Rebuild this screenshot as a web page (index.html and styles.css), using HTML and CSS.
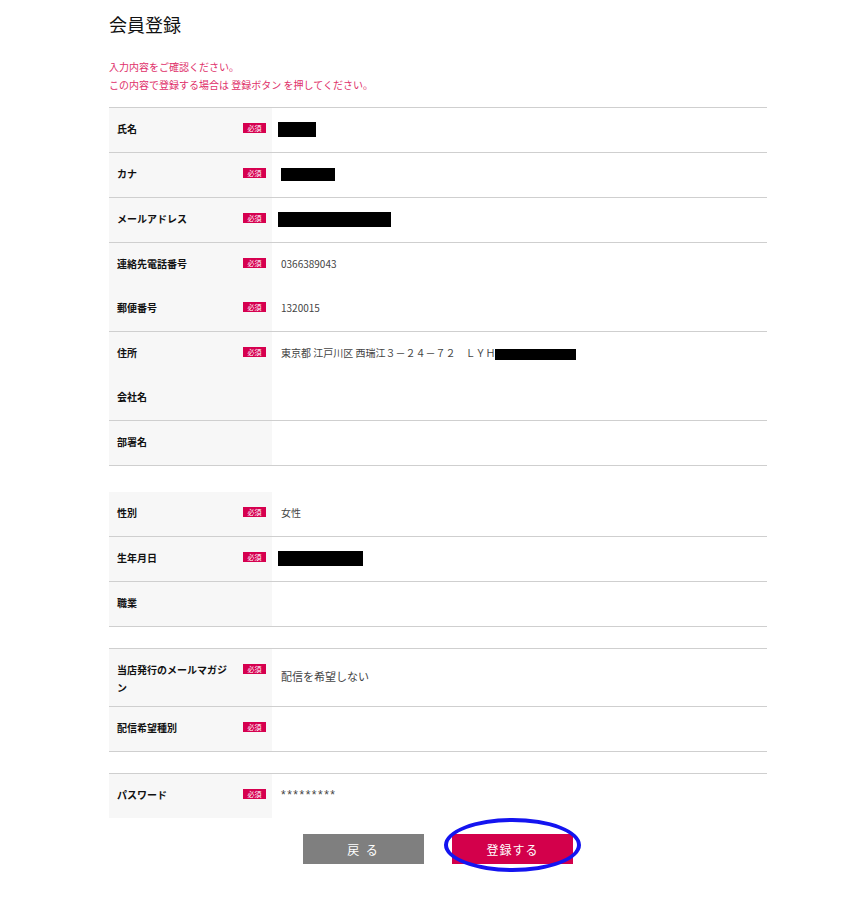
FILE: index.html
```html
<!DOCTYPE html>
<html lang="ja">
<head>
    <meta charset="UTF-8">
    <title>会員登録</title>
    <link rel="stylesheet" href="styles.css">
</head>
<body>
    <div class="wrap">
        <h1 class="page-title">会員登録</h1>
        <p class="notice">入力内容をご確認ください。<br>この内容で登録する場合は 登録ボタン を押してください。</p>

        <!-- 基本情報 -->
        <table class="form-table">
            <tr>
                <th><span class="label">氏名</span><span class="req">必須</span></th>
                <td><span class="mask" style="width:38px"></span></td>
            </tr>
            <tr>
                <th><span class="label">カナ</span><span class="req">必須</span></th>
                <td><span class="mask mask-kana" style="width:54px"></span></td>
            </tr>
            <tr>
                <th><span class="label">メールアドレス</span><span class="req">必須</span></th>
                <td><span class="mask" style="width:113px"></span></td>
            </tr>
            <tr class="no-line">
                <th><span class="label">連絡先電話番号</span><span class="req">必須</span></th>
                <td>0366389043</td>
            </tr>
            <tr>
                <th><span class="label">郵便番号</span><span class="req">必須</span></th>
                <td>1320015</td>
            </tr>
            <tr class="no-line">
                <th><span class="label">住所</span><span class="req">必須</span></th>
                <td>東京都 江戸川区 西瑞江３－２４－７２　ＬＹＨ<span class="mask mask-inline" style="width:81px"></span></td>
            </tr>
            <tr>
                <th><span class="label">会社名</span></th>
                <td></td>
            </tr>
            <tr>
                <th><span class="label">部署名</span></th>
                <td></td>
            </tr>
        </table>

        <!-- 属性 -->
        <table class="form-table no-top">
            <tr>
                <th><span class="label">性別</span><span class="req">必須</span></th>
                <td>女性</td>
            </tr>
            <tr>
                <th><span class="label">生年月日</span><span class="req">必須</span></th>
                <td><span class="mask" style="width:85px"></span></td>
            </tr>
            <tr>
                <th><span class="label">職業</span></th>
                <td></td>
            </tr>
        </table>

        <!-- メールマガジン -->
        <table class="form-table">
            <tr class="tall">
                <th><span class="label">当店発行のメールマガジン</span><span class="req">必須</span></th>
                <td class="big">配信を希望しない</td>
            </tr>
            <tr>
                <th><span class="label">配信希望種別</span><span class="req">必須</span></th>
                <td></td>
            </tr>
        </table>

        <!-- パスワード -->
        <table class="form-table">
            <tr class="no-line">
                <th><span class="label">パスワード</span><span class="req">必須</span></th>
                <td class="pw">*********</td>
            </tr>
        </table>

        <div class="buttons">
            <button class="btn btn-back">戻 る</button>
            <button class="btn btn-submit">登録する<span class="circle"></span></button>
        </div>
    </div>
</body>
</html>
```

FILE: styles.css
```css
body {
    margin: 0;
    background-color: #fff;
    color: #222;
    font-family: "Noto Sans CJK JP", "Noto Sans", sans-serif;
}
.wrap {
    width: 658px;
    margin-left: 109px;
    padding-bottom: 30px;
}
.page-title {
    margin: 0;
    padding-top: 11px;
    font-size: 18px;
    font-weight: normal;
    line-height: 26px;
    color: #111;
}
.notice {
    margin: 21px 0 13px 0;
    font-size: 10px;
    line-height: 18px;
    color: #e0306a;
}
.form-table {
    width: 100%;
    border-collapse: collapse;
    border-top: 1px solid #cfcfcf;
    margin-top: 21px;
}
.form-table:first-of-type {
    margin-top: 0;
}
.form-table.no-top {
    border-top: none;
    margin-top: 26px;
}
.form-table tr {
    border-bottom: 1px solid #cfcfcf;
}
.form-table tr.no-line {
    border-bottom: none;
}
.form-table th {
    width: 163px;
    height: 44px;
    padding: 3px 6px 0 8px;
    box-sizing: border-box;
    background-color: #f7f7f7;
    text-align: left;
    font-weight: bold;
    vertical-align: middle;
}
.form-table td {
    height: 41px;
    padding: 0 0 3px 9px;
    font-size: 10px;
    color: #444;
    vertical-align: middle;
}
.form-table tr.tall th {
    height: 57px;
}
.form-table tr.tall td {
    height: 54px;
}
.form-table th .label {
    display: inline-block;
    width: 114px;
    font-size: 10px;
    line-height: 18px;
    color: #111;
    vertical-align: top;
}
.req {
    display: inline-block;
    float: right;
    width: 23px;
    height: 10px;
    margin-top: 3px;
    background-color: #d6004f;
    color: #fff;
    font-size: 7px;
    line-height: 10px;
    text-align: center;
    font-weight: normal;
}
.form-table td.big {
    font-size: 11px;
}
.form-table td.pw {
    font-family: "Liberation Sans", sans-serif;
    font-size: 12px;
    letter-spacing: 1.5px;
}
.mask {
    display: inline-block;
    height: 15px;
    background-color: #000;
    vertical-align: middle;
    margin-left: -3px;
}
.mask-kana {
    height: 13px;
    margin-left: 0;
}
.mask-inline {
    height: 11px;
    margin-left: 0;
}
.buttons {
    display: flex;
    justify-content: center;
    gap: 28px;
    margin-top: 16px;
}
.btn {
    position: relative;
    width: 121px;
    height: 30px;
    border: none;
    color: #fff;
    font-family: "Noto Sans CJK JP", sans-serif;
    font-size: 12px;
    cursor: pointer;
}
.btn-back {
    background-color: #7f7f7f;
    letter-spacing: 2px;
}
.btn-submit {
    background-color: #d3004b;
    letter-spacing: 1px;
}
.circle {
    position: absolute;
    left: -8px;
    top: -16px;
    width: 129px;
    height: 46px;
    border: 4px solid #1414f0;
    border-radius: 50%;
}
```
